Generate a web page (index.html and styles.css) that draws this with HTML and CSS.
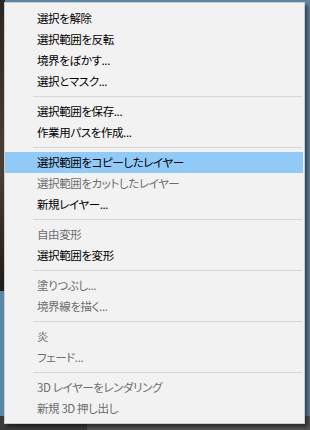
FILE: index.html
```html
<!DOCTYPE html>
<html lang="ja">
<head>
  <meta charset="UTF-8">
  <title>Selection Menu</title>
  <link rel="stylesheet" href="styles.css">
</head>
<body>

  <div class="menu">
    <div class="item">選択を解除</div>
    <div class="item">選択範囲を反転</div>
    <div class="item">境界をぼかす...</div>
    <div class="item">選択とマスク...</div>
    <div class="sep"></div>
    <div class="item">選択範囲を保存...</div>
    <div class="item">作業用パスを作成...</div>
    <div class="sep"></div>
    <div class="item active">選択範囲をコピーしたレイヤー</div>
    <div class="item off">選択範囲をカットしたレイヤー</div>
    <div class="item">新規レイヤー...</div>
    <div class="sep"></div>
    <div class="item off">自由変形</div>
    <div class="item">選択範囲を変形</div>
    <div class="sep"></div>
    <div class="item off">塗りつぶし...</div>
    <div class="item off">境界線を描く...</div>
    <div class="sep"></div>
    <div class="item off">炎</div>
    <div class="item off">フェード...</div>
    <div class="sep"></div>
    <div class="item off">3D レイヤーをレンダリング</div>
    <div class="item off">新規 3D 押し出し</div>
  </div>

</body>
</html>
```

FILE: styles.css
```css
html, body {
  margin: 0;
  height: 100%;
}
body {
  padding: 2px 0 0 4px;
  box-sizing: border-box;
  font-family: "Noto Sans CJK JP", "Noto Sans", sans-serif;
  /* canvas behind the popup: photo strip on the left, blue desk, dark bar at the bottom */
  background:
    linear-gradient(#3a3a3a, #3a3a3a) 0 416px / 87px 14px no-repeat,
    linear-gradient(#545454, #545454) 87px 416px / 223px 14px no-repeat,
    linear-gradient(180deg, #2b2622, #4a3f36 40%, #1f1b18 70%, #5b87a3 70%) 0 0 / 5px 416px no-repeat,
    #5b87a3;
}
.menu {
  width: 301px;
  box-sizing: border-box;
  background: #f2f2f2;
  border: 1px solid #cccccc;
  padding: 5px 1px 4px 0;
  box-shadow: 3px 3px 3px rgba(0, 0, 0, 0.45);
}
.item {
  height: 21px;
  line-height: 20px;
  padding-left: 32px;
  font-size: 11.5px;
  font-feature-settings: "palt";
  letter-spacing: -0.4px;
  color: #000;
  white-space: nowrap;
}
.item.off { color: #6d6d6d; }
.item.active { background: #91c9f7; }
.sep {
  height: 1px;
  background: #d7d7d7;
  margin: 4px 1px 4px 28px;
}
```
